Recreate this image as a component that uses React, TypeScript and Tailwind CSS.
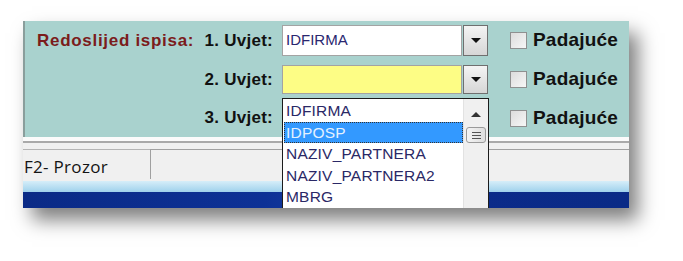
import React from "react";

const items = ["IDFIRMA", "IDPOSP", "NAZIV_PARTNERA", "NAZIV_PARTNERA2", "MBRG"];

const ComboButton: React.FC = () => (
  <div className="w-[25px] h-full border border-[#6f6f6f] bg-[linear-gradient(#f4f4f4,#d6d6d6)] flex items-center justify-center">
    <div className="w-0 h-0 border-l-[5px] border-r-[5px] border-t-[5px] border-l-transparent border-r-transparent border-t-[#111]" />
  </div>
);

const Combo: React.FC<{ value?: string; yellow?: boolean }> = ({ value, yellow }) => (
  <div className="ml-[9px] flex h-full gap-px">
    <div
      className={`w-[180px] h-full border border-[#a3a3a3] flex items-center pl-[3px] text-[15px] text-[#2a2770] ${
        yellow ? "bg-[#fdfd85]" : "bg-white"
      }`}
    >
      {value}
    </div>
    <ComboButton />
  </div>
);

const Check: React.FC = () => (
  <div className="ml-[22px] flex items-center gap-[6px]">
    <div className="w-[17px] h-[17px] border border-[#8f9090] bg-[linear-gradient(135deg,#dcdcdc,#f7f7f7)]" />
    <span className="text-[19px] font-bold tracking-[0.2px] text-[#111]">Padajuće</span>
  </div>
);

export default function App() {
  return (
    <div className="w-[683px] h-[261px] bg-white pt-[21px] pl-[23px] font-['Liberation_Sans',Arial,sans-serif]">
      <div className="relative w-[606px] h-[187px] overflow-hidden shadow-[9px_12px_18px_rgba(0,0,0,0.5)] flex flex-col">
        {/* teal form area */}
        <div className="h-[116px] bg-[#a9d2ce] border-l-2 border-[#8a9e9c] pt-[4px] flex flex-col gap-[9px]">
          <div className="h-[31px] flex items-center">
            <div className="w-[248px] pl-[12px] flex items-center justify-between">
              <span className="text-[17px] font-bold tracking-[0.7px] text-[#7b1c1c]">Redoslijed ispisa:</span>
              <span className="text-[17px] font-bold tracking-[0.25px] text-[#111]">1. Uvjet:</span>
            </div>
            <Combo value="IDFIRMA" />
            <Check />
          </div>
          <div className="h-[29px] flex items-center">
            <div className="w-[248px] flex justify-end">
              <span className="text-[17px] font-bold tracking-[0.25px] text-[#111]">2. Uvjet:</span>
            </div>
            <Combo yellow />
            <Check />
          </div>
          <div className="h-[30px] flex items-center">
            <div className="w-[248px] flex justify-end">
              <span className="text-[17px] font-bold tracking-[0.25px] text-[#111]">3. Uvjet:</span>
            </div>
            <div className="ml-[9px] w-[206px]" />
            <Check />
          </div>
        </div>

        {/* status bar */}
        <div className="h-[4px] bg-[#fbfbfb]" />
        <div className="h-[2px] bg-[#a9a9a9]" />
        <div className="h-[6px] bg-[#f0f0f0]" />
        <div className="h-[32px] bg-[#f0f0f0] flex">
          <div className="w-[127px] border-t border-[#b4b4b4] flex items-center pl-px pt-[2px]">
            <span className="font-['Open_Sans',sans-serif] text-[17px] tracking-[0.3px] text-[#141414]">F2- Prozor</span>
          </div>
          <div className="flex-1 border-t border-l border-[#a0a0a0] mb-[2px]" />
        </div>
        <div className="h-[11px] bg-[linear-gradient(#d6eef9,#9fd1ec)]" />
        <div className="h-[16px] bg-[linear-gradient(100deg,#0a2a86_0%,#0d3196_40%,#1a3fa0_55%,#0b2b8a_70%,#0a2a86_100%)]" />

        {/* open dropdown list */}
        <div className="absolute left-[259px] top-[77px] w-[207px] bottom-0 border border-[#1c1c1c] border-b-0 bg-white flex">
          <div className="flex-1 pt-px pl-px">
            {items.map((it, i) => (
              <div
                key={it}
                className={`h-[21.5px] flex items-center pl-[2px] text-[15.5px] tracking-[0.2px] ${
                  i === 1
                    ? "bg-[#3399ff] outline-1 outline-dotted outline-offset-[-1px] outline-[#333] text-[#e4f1ff]"
                    : "text-[#2a2866]"
                }`}
              >
                {it}
              </div>
            ))}
          </div>
          <div className="w-[25px] bg-[#f0f0f0] border-l border-[#e2e2e2] flex flex-col items-center">
            <div className="mt-[13px] w-0 h-0 border-l-[5px] border-r-[5px] border-b-[5px] border-l-transparent border-r-transparent border-b-[#333]" />
            <div className="mt-[10px] w-[20px] h-[16px] rounded-[3px] border border-[#9a9a9a] bg-[linear-gradient(90deg,#f4f4f4,#dedede)] flex flex-col items-center justify-center gap-[2px]">
              <div className="w-[9px] h-px bg-[#555]" />
              <div className="w-[9px] h-px bg-[#555]" />
              <div className="w-[9px] h-px bg-[#555]" />
            </div>
          </div>
        </div>
      </div>
    </div>
  );
}
